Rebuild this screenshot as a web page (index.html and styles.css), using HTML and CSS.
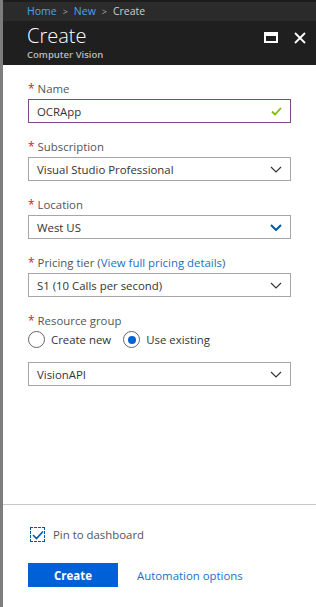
FILE: index.html
```html
<!DOCTYPE html>
<html lang="en">
<head>
    <meta charset="UTF-8">
    <meta name="viewport" content="width=device-width, initial-scale=1.0">
    <title>Create - Computer Vision</title>
    <link rel="stylesheet" href="styles.css">
</head>
<body>
    <div class="blade">
        <!-- Breadcrumb -->
        <div class="crumbs">
            <a href="#">Home</a><span class="sep">&gt;</span><a href="#">New</a><span class="sep">&gt;</span><span class="current">Create</span>
        </div>

        <!-- Header -->
        <div class="header">
            <div class="titles">
                <h1>Create</h1>
                <div class="subtitle">Computer Vision</div>
            </div>
            <div class="actions">
                <svg width="14" height="11" viewBox="0 0 14 11"><rect x="1" y="1" width="12" height="9" fill="none" stroke="#fff" stroke-width="2"/><rect x="1" y="1" width="12" height="3" fill="#fff"/></svg>
                <svg width="12" height="12" viewBox="0 0 12 12"><path d="M1 1 L11 11 M11 1 L1 11" stroke="#fff" stroke-width="1.8"/></svg>
            </div>
        </div>

        <!-- Form -->
        <div class="content">
            <div class="field">
                <label><span class="req">*</span> Name</label>
                <div class="input valid">
                    <span>OCRApp</span>
                    <svg width="11" height="9" viewBox="0 0 11 9"><path d="M1 4.5 L4 7.5 L10 1" fill="none" stroke="#7fba00" stroke-width="1.8"/></svg>
                </div>
            </div>

            <div class="field">
                <label><span class="req">*</span> Subscription</label>
                <div class="input">
                    <span>Visual Studio Professional</span>
                    <svg class="chev" width="12" height="7" viewBox="0 0 12 7"><path d="M1 1 L6 6 L11 1" fill="none" stroke="#333" stroke-width="1.2"/></svg>
                </div>
            </div>

            <div class="field">
                <label><span class="req">*</span> Location</label>
                <div class="input">
                    <span>West US</span>
                    <svg class="chev" width="12" height="7" viewBox="0 0 12 7"><path d="M1 1 L6 6 L11 1" fill="none" stroke="#0058ad" stroke-width="2"/></svg>
                </div>
            </div>

            <div class="field">
                <label><span class="req">*</span> Pricing tier (<a href="#">View full pricing details</a>)</label>
                <div class="input">
                    <span>S1 (10 Calls per second)</span>
                    <svg class="chev" width="12" height="7" viewBox="0 0 12 7"><path d="M1 1 L6 6 L11 1" fill="none" stroke="#333" stroke-width="1.2"/></svg>
                </div>
            </div>

            <div class="field">
                <label><span class="req">*</span> Resource group</label>
                <div class="radios">
                    <span class="radio"><span class="circle"></span>Create new</span>
                    <span class="radio"><span class="circle on"></span>Use existing</span>
                </div>
                <div class="input spaced">
                    <span>VisionAPI</span>
                    <svg class="chev" width="12" height="7" viewBox="0 0 12 7"><path d="M1 1 L6 6 L11 1" fill="none" stroke="#333" stroke-width="1.2"/></svg>
                </div>
            </div>
        </div>

        <!-- Footer -->
        <div class="footer">
            <div class="pin">
                <span class="checkbox">
                    <svg width="12" height="10" viewBox="0 0 12 10"><path d="M1 5 L4.5 8.5 L11 1.5" fill="none" stroke="#0058ad" stroke-width="1.6"/></svg>
                </span>
                Pin to dashboard
            </div>
            <div class="buttons">
                <button>Create</button>
                <a href="#">Automation options</a>
            </div>
        </div>
    </div>
</body>
</html>
```

FILE: styles.css
```css
/* Global Styles */
* {
    margin: 0;
    padding: 0;
    box-sizing: border-box;
}

body {
    font-family: 'Open Sans', 'Noto Sans', sans-serif;
    background: #fff;
    color: #333;
    width: 316px;
    height: 607px;
    overflow: hidden;
}

a {
    color: #1a6fc7;
    text-decoration: none;
}

/* Blade frame with the grey strip on the left */
.blade {
    height: 607px;
    display: flex;
    flex-direction: column;
    border-left: 3px solid #7d7d7d;
}

/* Breadcrumb */
.crumbs {
    height: 21px;
    background: #2b2b2b;
    border-top: 2px solid #1c1c1c;
    padding-left: 24px;
    font-size: 10.5px;
    line-height: 18px;
    color: #ccc;
}

.crumbs a {
    color: #4da3e8;
}

.crumbs .sep {
    margin: 0 6px;
    font-size: 9px;
    color: #aaa;
}

/* Header */
.header {
    height: 44px;
    background: #1f1f1f;
    display: flex;
    justify-content: space-between;
    padding: 2px 10px 0 24px;
    color: #fff;
}

.header h1 {
    font-weight: 300;
    font-size: 20px;
    line-height: 26px;
}

.subtitle {
    font-size: 9.5px;
    font-weight: 600;
    color: #bbb;
    line-height: 12px;
}

.actions {
    display: flex;
    gap: 16px;
    padding-top: 9px;
}

/* Form */
.content {
    flex: 1;
    padding: 16px 25px 0 25px;
}

.field {
    margin-bottom: 16px;
}

.field label {
    display: block;
    font-size: 11.4px;
    line-height: 16px;
    color: #555;
    margin-bottom: 2px;
}

.req {
    color: #e81123;
    font-size: 12px;
}

.input {
    height: 24px;
    border: 1px solid #a6a6a6;
    display: flex;
    align-items: center;
    justify-content: space-between;
    padding: 0 8px 0 8px;
    font-size: 11.4px;
    color: #333;
}

.input.valid {
    border-color: #7a4a8a;
}

.input.spaced {
    margin-top: 14px;
}

/* Radios */
.radios {
    display: flex;
    gap: 12px;
    font-size: 11.4px;
    color: #333;
}

.radio {
    display: flex;
    align-items: center;
    gap: 6px;
}

.circle {
    width: 17px;
    height: 17px;
    border: 1px solid #666;
    border-radius: 50%;
    display: flex;
    align-items: center;
    justify-content: center;
}

.circle.on::after {
    content: "";
    width: 8px;
    height: 8px;
    border-radius: 50%;
    background: #0063d1;
}

/* Footer */
.footer {
    border-top: 1px solid #c8c8c8;
    height: 103px;
    padding: 22px 25px 0 25px;
}

.pin {
    display: flex;
    align-items: center;
    gap: 8px;
    font-size: 11.4px;
    color: #555;
}

.checkbox {
    width: 15px;
    height: 15px;
    margin-left: 2px;
    border: 1px dashed #0058ad;
    display: flex;
    align-items: center;
    justify-content: center;
}

.buttons {
    display: flex;
    align-items: center;
    gap: 19px;
    margin-top: 21px;
}

button {
    width: 90px;
    height: 24px;
    background: #0060d8;
    color: #fff;
    border: none;
    font-family: inherit;
    font-size: 11.5px;
    font-weight: 700;
}

.buttons a {
    font-size: 11.4px;
}
```
